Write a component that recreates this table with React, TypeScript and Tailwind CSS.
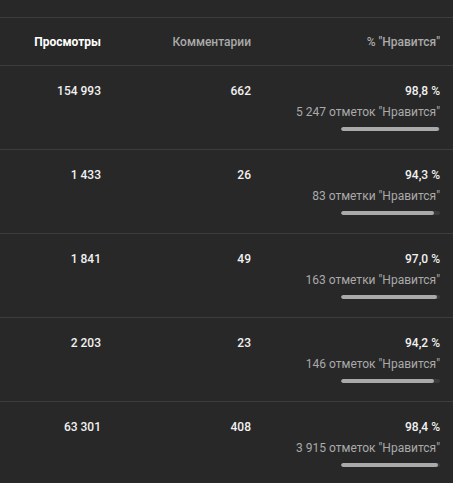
import React from "react";

const rows = [
  { views: "154 993", comments: "662", pct: "98,8 %", likes: "5 247 отметок \"Нравится\"", fill: 98.8 },
  { views: "1 433", comments: "26", pct: "94,3 %", likes: "83 отметки \"Нравится\"", fill: 94.3 },
  { views: "1 841", comments: "49", pct: "97,0 %", likes: "163 отметки \"Нравится\"", fill: 97.0 },
  { views: "2 203", comments: "23", pct: "94,2 %", likes: "146 отметок \"Нравится\"", fill: 94.2 },
  { views: "63 301", comments: "408", pct: "98,4 %", likes: "3 915 отметок \"Нравится\"", fill: 98.4 },
];

export default function App() {
  return (
    <div
      className="h-[483px] w-[453px] overflow-hidden bg-[#282828] pt-[17px] text-[12px]"
      style={{ fontFamily: "Roboto, 'Liberation Sans', sans-serif" }}
    >
      <div className="flex h-12 items-center border-t border-[#3d3d3d]">
        <div className="w-[101px] text-right font-bold text-white">Просмотры</div>
        <div className="w-[150px] text-right font-medium text-[#aaaaaa]">Комментарии</div>
        <div className="flex-1 pr-[13px] text-right font-medium text-[#aaaaaa]">% "Нравится"</div>
      </div>

      {rows.map((r) => (
        <div key={r.views} className="flex h-[84px] border-t border-[#3d3d3d] pt-[15px]">
          <div className="w-[101px] text-right font-medium leading-5 text-[#f1f1f1]">{r.views}</div>
          <div className="w-[150px] text-right font-medium leading-5 text-[#f1f1f1]">{r.comments}</div>
          <div className="flex flex-1 flex-col items-end pr-[13px]">
            <div className="font-medium leading-5 text-[#f1f1f1]">{r.pct}</div>
            <div className="mt-px leading-5 text-[#aaaaaa]">{r.likes}</div>
            <div className="mt-[5px] h-1 w-[99px] overflow-hidden rounded-full bg-[#3a3a3a]">
              <div className="h-full rounded-full bg-[#aaaaaa]" style={{ width: `${r.fill}%` }} />
            </div>
          </div>
        </div>
      ))}
    </div>
  );
}
